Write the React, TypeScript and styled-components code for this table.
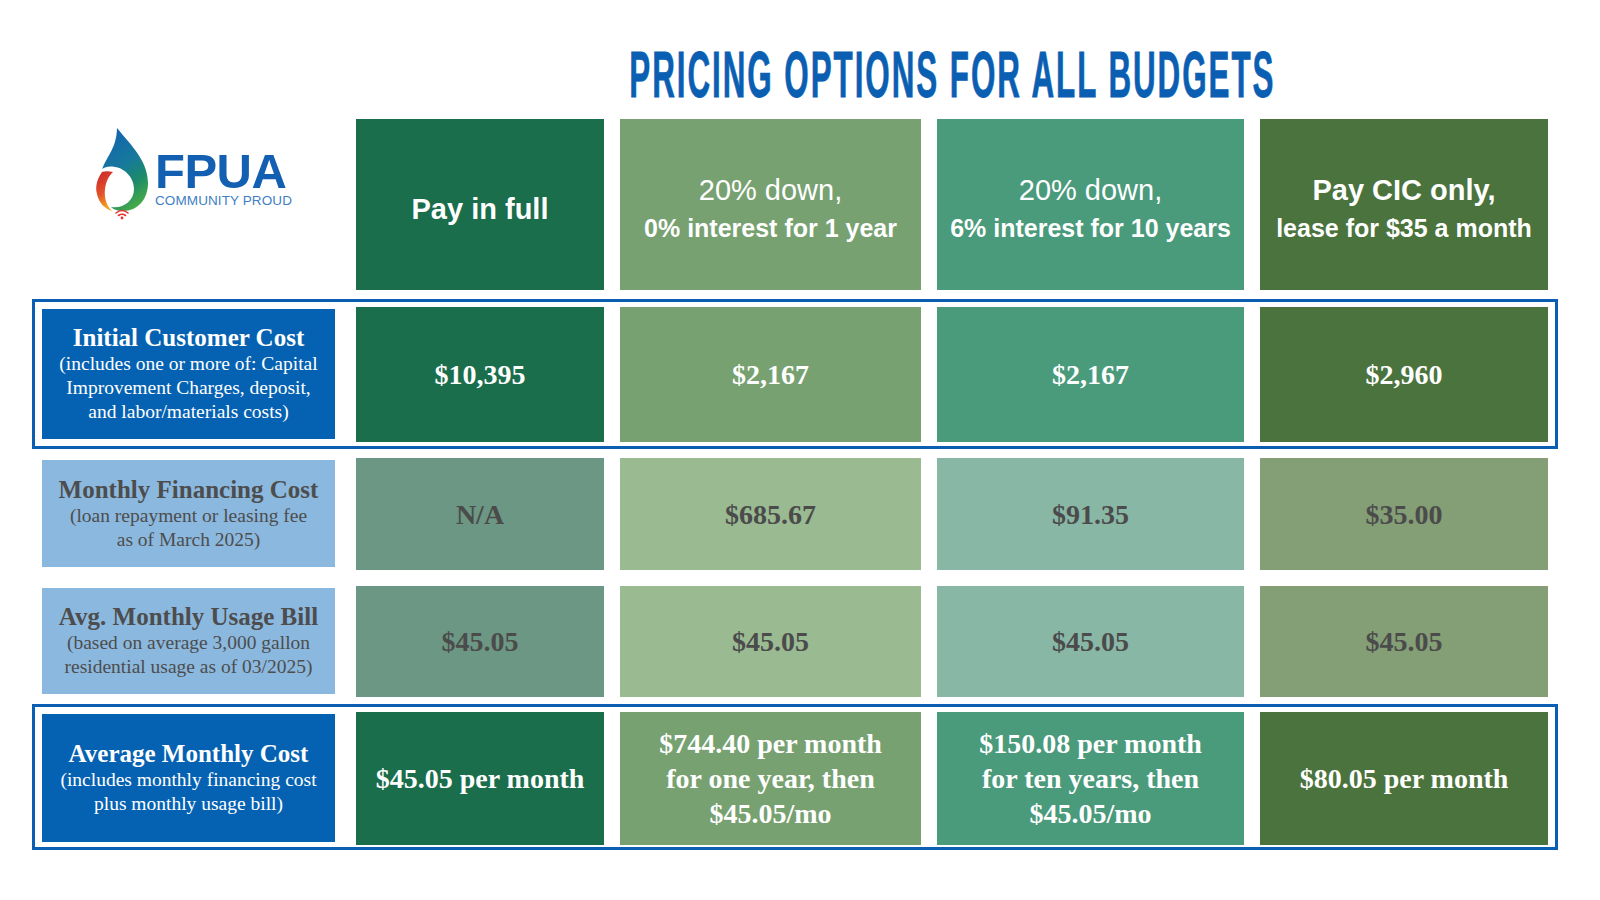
import React from 'react';
import styled, { createGlobalStyle } from 'styled-components';

const GlobalStyle = createGlobalStyle`
	html,
	body {
		margin: 0;
		padding: 0;
		background: #ffffff;
	}
	body {
		width: 1600px;
		height: 900px;
		overflow: hidden;
	}
`;

const COLUMNS = '298px 248px 301px 307px 288px';

interface RowProps {
	$top: number;
	$height: number;
	$boxed?: boolean;
	$padBottom?: number;
}

const Page = styled.div`
	width: 1526px;
	padding-left: 32px;
	display: flex;
	flex-direction: column;
`;

const Row = styled.div<RowProps>`
	display: grid;
	grid-template-columns: ${COLUMNS};
	grid-auto-rows: ${({ $height }) => $height}px;
	column-gap: 16px;
	margin-top: ${({ $top }) => $top}px;
	padding: ${({ $boxed, $padBottom }) =>
		$boxed ? `5px 6px ${$padBottom ?? 4}px 7px` : '0 9px 0 10px'};
	border: ${({ $boxed }) => ($boxed ? '3px solid #0b5fb3' : 'none')};
`;

const Title = styled.h1`
	grid-column: 2 / -1;
	margin: 0;
	height: 64px;
	display: flex;
	justify-content: center;
	white-space: nowrap;
	font-family: 'Liberation Sans', Arial, sans-serif;
	font-weight: 700;
	font-size: 64px;
	line-height: 64px;
	color: #0b5fb3;
`;

const TitleText = styled.span`
	flex-shrink: 0;
	display: inline-block;
	letter-spacing: 4px;
	transform: scaleX(0.49);
	transform-origin: center;
	-webkit-text-stroke: 0.8px #0b5fb3;
`;

const LogoCell = styled.div`
	display: flex;
	align-items: flex-start;
	padding: 8px 0 0 51px;
`;

const LogoText = styled.div`
	display: flex;
	flex-direction: column;
	margin-left: 6px;
	padding-top: 22px;
	font-family: 'Liberation Sans', Arial, sans-serif;
`;

const LogoName = styled.span`
	font-size: 49px;
	line-height: 44px;
	font-weight: 700;
	color: #1360b2;
	letter-spacing: -0.5px;
`;

const LogoTagline = styled.span`
	margin-top: 1px;
	font-size: 13.5px;
	line-height: 14px;
	color: #3f80c4;
	letter-spacing: 0.1px;
`;

const HeaderCell = styled.div<{ $bg: string }>`
	display: flex;
	flex-direction: column;
	align-items: center;
	justify-content: center;
	padding-top: 8px;
	background: ${({ $bg }) => $bg};
	color: #ffffff;
	font-family: 'Liberation Sans', Arial, sans-serif;
	text-align: center;
`;

const HeadLine = styled.span<{ $size: number; $bold?: boolean }>`
	display: block;
	font-size: ${({ $size }) => $size}px;
	font-weight: ${({ $bold }) => ($bold ? 700 : 400)};
	line-height: 38px;
	white-space: nowrap;
`;

const Label = styled.div<{ $dark?: boolean }>`
	width: 293px;
	margin: 2px 0 3px;
	display: flex;
	flex-direction: column;
	align-items: center;
	justify-content: center;
	text-align: center;
	background: ${({ $dark }) => ($dark ? '#0562b2' : '#8bb8de')};
	color: ${({ $dark }) => ($dark ? '#ffffff' : '#4d4d4d')};
	font-family: 'Liberation Serif', 'Times New Roman', serif;
`;

const LabelTitle = styled.span`
	font-size: 25px;
	line-height: 28px;
	font-weight: 700;
	white-space: nowrap;
`;

const LabelNote = styled.span`
	font-size: 19.5px;
	line-height: 24px;
	white-space: nowrap;
`;

const ValueCell = styled.div<{ $bg: string; $muted?: boolean }>`
	display: flex;
	flex-direction: column;
	align-items: center;
	justify-content: center;
	text-align: center;
	background: ${({ $bg }) => $bg};
	color: ${({ $muted }) => ($muted ? '#4b4b4b' : '#ffffff')};
	font-family: 'Liberation Serif', 'Times New Roman', serif;
	font-weight: 700;
	font-size: 28px;
	line-height: 35px;
	white-space: nowrap;
`;

const Logo: React.FC = () => (
	<svg width="56" height="94" viewBox="0 0 56 94">
		<defs>
			<linearGradient id="flameBlue" x1="0.3" y1="0" x2="0.7" y2="1">
				<stop offset="0" stopColor="#1463b1" />
				<stop offset="0.45" stopColor="#167a9a" />
				<stop offset="0.7" stopColor="#1d8a6a" />
				<stop offset="1" stopColor="#4bae44" />
			</linearGradient>
			<linearGradient id="flameRed" x1="0" y1="0" x2="0.3" y2="1">
				<stop offset="0" stopColor="#c9252d" />
				<stop offset="0.6" stopColor="#e2512a" />
				<stop offset="1" stopColor="#f5a21e" />
			</linearGradient>
		</defs>
		<path
			d="M24 1 C36 16 55 33 55 56 C55 72 45 84 30 84 C24 84 20 82 18 80 C30 82 41 74 41 62 C41 50 31 41 22 40 C16 39 12 40 9 42 C12 34 18 26 21 18 C23 12 24 6 24 1 Z"
			fill="url(#flameBlue)"
		/>
		<path
			d="M9 45 C4 52 2 60 4 67 C6 76 12 82 19 84 C13 78 11 70 12 62 C13 54 16 49 20 45 C16 44 12 44 9 45 Z"
			fill="url(#flameRed)"
		/>
		<g fill="none" stroke="#e8302f" strokeWidth="1.6" strokeLinecap="round">
			<path d="M23 86 Q29 81 35 86" />
			<path d="M25.5 88.5 Q29 86 32.5 88.5" />
		</g>
		<circle cx="29" cy="91" r="1.4" fill="#e8302f" />
	</svg>
);

interface HeadPart {
	text: string;
	size: number;
	bold?: boolean;
}

interface Option {
	dark: string;
	light: string;
	head: HeadPart[];
	initial: string;
	financing: string;
	usage: string;
	average: string[];
}

const options: Option[] = [
	{
		dark: '#1a6e4c',
		light: '#6b9784',
		head: [{ text: 'Pay in full', size: 29, bold: true }],
		initial: '$10,395',
		financing: 'N/A',
		usage: '$45.05',
		average: ['$45.05 per month'],
	},
	{
		dark: '#78a172',
		light: '#9aba92',
		head: [
			{ text: '20% down,', size: 29 },
			{ text: '0% interest for 1 year', size: 25, bold: true },
		],
		initial: '$2,167',
		financing: '$685.67',
		usage: '$45.05',
		average: ['$744.40 per month', 'for one year, then', '$45.05/mo'],
	},
	{
		dark: '#4a9a7c',
		light: '#89b7a6',
		head: [
			{ text: '20% down,', size: 29 },
			{ text: '6% interest for 10 years', size: 25, bold: true },
		],
		initial: '$2,167',
		financing: '$91.35',
		usage: '$45.05',
		average: ['$150.08 per month', 'for ten years, then', '$45.05/mo'],
	},
	{
		dark: '#4b733d',
		light: '#849e76',
		head: [
			{ text: 'Pay CIC only,', size: 29, bold: true },
			{ text: 'lease for $35 a month', size: 25, bold: true },
		],
		initial: '$2,960',
		financing: '$35.00',
		usage: '$45.05',
		average: ['$80.05 per month'],
	},
];

const App: React.FC = () => {
	return (
		<>
			<GlobalStyle />
			<Page>
				<Row $top={43} $height={64}>
					<Title>
						<TitleText>PRICING OPTIONS FOR ALL BUDGETS</TitleText>
					</Title>
				</Row>

				<Row $top={12} $height={171}>
					<LogoCell>
						<Logo />
						<LogoText>
							<LogoName>FPUA</LogoName>
							<LogoTagline>COMMUNITY PROUD</LogoTagline>
						</LogoText>
					</LogoCell>
					{options.map((o) => (
						<HeaderCell key={o.head[0].text + o.dark} $bg={o.dark}>
							{o.head.map((h) => (
								<HeadLine key={h.text} $size={h.size} $bold={h.bold}>
									{h.text}
								</HeadLine>
							))}
						</HeaderCell>
					))}
				</Row>

				<Row $top={9} $height={135} $boxed $padBottom={4}>
					<Label $dark>
						<LabelTitle>Initial Customer Cost</LabelTitle>
						<LabelNote>(includes one or more of: Capital</LabelNote>
						<LabelNote>Improvement Charges, deposit,</LabelNote>
						<LabelNote>and labor/materials costs)</LabelNote>
					</Label>
					{options.map((o) => (
						<ValueCell key={o.dark} $bg={o.dark}>
							{o.initial}
						</ValueCell>
					))}
				</Row>

				<Row $top={9} $height={112}>
					<Label>
						<LabelTitle>Monthly Financing Cost</LabelTitle>
						<LabelNote>(loan repayment or leasing fee</LabelNote>
						<LabelNote>as of March 2025)</LabelNote>
					</Label>
					{options.map((o) => (
						<ValueCell key={o.dark} $bg={o.light} $muted>
							{o.financing}
						</ValueCell>
					))}
				</Row>

				<Row $top={16} $height={111}>
					<Label>
						<LabelTitle>Avg. Monthly Usage Bill</LabelTitle>
						<LabelNote>(based on average 3,000 gallon</LabelNote>
						<LabelNote>residential usage as of 03/2025)</LabelNote>
					</Label>
					{options.map((o) => (
						<ValueCell key={o.dark} $bg={o.light} $muted>
							{o.usage}
						</ValueCell>
					))}
				</Row>

				<Row $top={7} $height={133} $boxed $padBottom={2}>
					<Label $dark>
						<LabelTitle>Average Monthly Cost</LabelTitle>
						<LabelNote>(includes monthly financing cost</LabelNote>
						<LabelNote>plus monthly usage bill)</LabelNote>
					</Label>
					{options.map((o) => (
						<ValueCell key={o.dark} $bg={o.dark}>
							{o.average.map((line) => (
								<span key={line}>{line}</span>
							))}
						</ValueCell>
					))}
				</Row>
			</Page>
		</>
	);
};

export default App;
